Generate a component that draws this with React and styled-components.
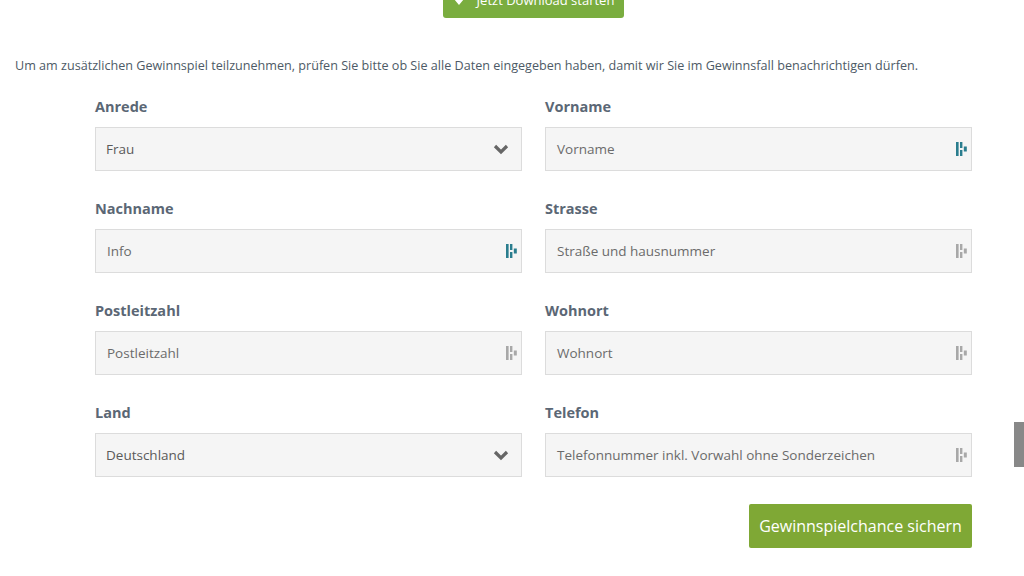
import React from 'react';
import styled, { createGlobalStyle } from 'styled-components';

const Global = createGlobalStyle`
  html, body { margin: 0; padding: 0; background: #fff; overflow: hidden; }
  body { font-family: "Source Sans Pro", "Open Sans", "Liberation Sans", sans-serif; }
`

const Page = styled.div`
  width: 1024px;
  height: 576px;
  position: relative;
  overflow: hidden;
`

const TopBar = styled.div`
  display: flex;
  justify-content: center;
  padding-left: 43px;
`

const DownloadButton = styled.div`
  width: 181px;
  height: 36px;
  margin-top: -18px;
  background: #7aad3f;
  border-radius: 3px;
  color: #fff;
  font-size: 13px;
  display: flex;
  align-items: center;
  justify-content: center;
  gap: 12px;
`

const Intro = styled.p`
  margin: 39px 0 0 15px;
  font-size: 12.6px;
  color: #4d5a66;
  white-space: nowrap;
`

const Grid = styled.div`
  display: grid;
  grid-template-columns: 427px 427px;
  column-gap: 23px;
  row-gap: 28px;
  margin: 23px 0 0 95px;
`

const Field = styled.div`
  display: flex;
  flex-direction: column;
`

const Label = styled.label`
  font-size: 14.5px;
  font-weight: bold;
  color: #5b6775;
  height: 20px;
  line-height: 20px;
  margin-bottom: 10px;
`

const Box = styled.div`
  height: 44px;
  box-sizing: border-box;
  border: 1px solid #dcdcdc;
  background: #f5f5f5;
  display: flex;
  align-items: center;
  justify-content: space-between;
  padding: 0 ${p => (p.select ? '12px' : '4px')} 0 ${p => (p.select ? '10px' : '11px')};
  font-size: 13.5px;
  color: ${p => (p.select ? '#5a5a5a' : '#6b6b6b')};
`

const Footer = styled.div`
  display: flex;
  justify-content: flex-end;
  width: 877px;
  margin: 27px 0 0 95px;
`

const Submit = styled.button`
  width: 223px;
  height: 44px;
  background: #7fa835;
  border: none;
  border-radius: 2px;
  color: #fff;
  font-family: inherit;
  font-size: 16px;
  padding: 0;
`

const Scroll = styled.div`
  position: absolute;
  right: 0;
  top: 422px;
  width: 10px;
  height: 45px;
  background: #888;
`

const Chevron = () => (
  <svg width="16" height="11" viewBox="0 0 16 11">
    <path d="M2 2 L8 8 L14 2" fill="none" stroke="#666" strokeWidth="3.2" />
  </svg>
)

const DownloadIcon = () => (
  <svg width="12" height="12" viewBox="0 0 12 12">
    <path d="M4 0 H8 V5 H11 L6 11 L1 5 H4 Z" fill="#fff" />
  </svg>
)

const KeyIcon = ({ active }) => {
  const c = active ? '#2a7d8e' : '#a8a8a8'
  return (
    <svg width="11" height="14" viewBox="0 0 11 14">
      <rect x="0" y="0" width="2.6" height="14" fill={c} />
      <rect x="4" y="0" width="2.4" height="6" fill={c} />
      <rect x="4" y="8" width="2.4" height="6" fill={c} />
      <rect x="7.8" y="4.5" width="3" height="5" fill={c} />
    </svg>
  )
}

const fields = [
  { label: 'Anrede', value: 'Frau', select: true },
  { label: 'Vorname', value: 'Vorname', active: true },
  { label: 'Nachname', value: 'Info', active: true },
  { label: 'Strasse', value: 'Straße und hausnummer' },
  { label: 'Postleitzahl', value: 'Postleitzahl' },
  { label: 'Wohnort', value: 'Wohnort' },
  { label: 'Land', value: 'Deutschland', select: true },
  { label: 'Telefon', value: 'Telefonnummer inkl. Vorwahl ohne Sonderzeichen' },
]

export default function App() {
  return (
    <Page>
      <Global />
      <TopBar>
        <DownloadButton>
          <DownloadIcon />
          <span>Jetzt Download starten</span>
        </DownloadButton>
      </TopBar>
      <Intro>
        Um am zusätzlichen Gewinnspiel teilzunehmen, prüfen Sie bitte ob Sie alle Daten eingegeben haben, damit wir Sie im Gewinnsfall benachrichtigen dürfen.
      </Intro>
      <Grid>
        {fields.map(f => (
          <Field key={f.label}>
            <Label>{f.label}</Label>
            <Box select={f.select}>
              <span>{f.value}</span>
              {f.select ? <Chevron /> : <KeyIcon active={f.active} />}
            </Box>
          </Field>
        ))}
      </Grid>
      <Footer>
        <Submit>Gewinnspielchance sichern</Submit>
      </Footer>
      <Scroll />
    </Page>
  )
}
